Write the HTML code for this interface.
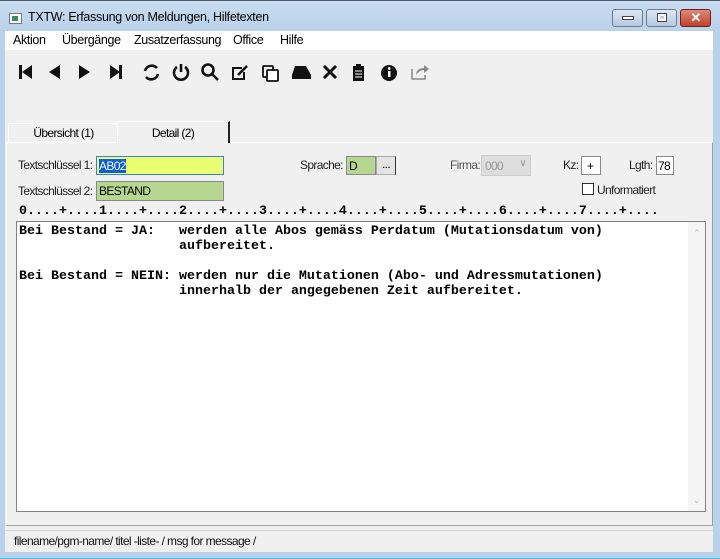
<!DOCTYPE html>
<html><head><meta charset="utf-8"><style>
*{box-sizing:border-box;margin:0;padding:0}
body{width:720px;height:559px;overflow:hidden;background:#b9d1ea;font-family:"Liberation Sans",sans-serif;font-size:12px;letter-spacing:-0.65px;position:relative}
.abs{position:absolute}
.title{left:0;top:0;width:720px;height:31px;background:linear-gradient(#c9dcf0,#b9d1ea);border-top:1px solid #4a5a6a}
.menu{left:5px;top:31px;width:708px;height:19px;background:#fff}
.menu span{position:absolute;top:2px;font-size:12.5px;letter-spacing:-0.35px}
.client{left:5px;top:50px;width:708px;height:502px;background:#f0f0f0}
.btn{top:9px;height:18px;border:1px solid #6d7b8e;border-radius:3px;background:linear-gradient(#dde8f4,#b5c8df)}
.lbl{font-size:12px;color:#222}
.mono{font-family:"Liberation Mono",monospace;font-weight:bold;font-size:13.33px;line-height:15px;white-space:pre;color:#000;letter-spacing:0}
</style></head><body>
<div class="abs title"></div>
<div class="abs" style="left:9px;top:13px;width:13px;height:11px;background:#fff;border:1px solid #777"><div style="margin:2px;width:6px;height:5px;background:#3a8a6a"></div></div>
<div class="abs" style="left:28px;top:10px;font-size:12.5px;letter-spacing:-0.3px;color:#000">TXTW: Erfassung von Meldungen, Hilfetexten</div>
<div class="abs btn" style="left:612px;width:31px"><div style="margin:6px auto;width:12px;height:4px;background:#fff;border:1px solid #445"></div></div>
<div class="abs btn" style="left:646px;width:31px"><div style="margin:3px auto;width:10px;height:9px;border:1px solid #445;background:#fff"><div style="margin:2px;height:3px;background:#ccd"></div></div></div>
<div class="abs btn" style="left:680px;width:31px;background:linear-gradient(#e08a78,#c0402c);border-color:#6a2020;color:#fff;font-weight:bold;text-align:center;font-size:13px;line-height:15px">✕</div>
<div class="abs menu">
<span style="left:8px">Aktion</span><span style="left:57px">Übergänge</span><span style="left:129px">Zusatzerfassung</span><span style="left:228px">Office</span><span style="left:275px">Hilfe</span>
</div>
<div class="abs client"></div>
<svg class="abs" style="left:0;top:60px" width="440" height="26" viewBox="0 0 440 26">
<g fill="#111">
<rect x="19" y="5" width="3" height="14"/><path d="M32 5V19L22 12Z"/>
<path d="M60 5V19L49 12Z"/>
<path d="M79 5V19L90 12Z"/>
<path d="M110 5V19L120 12Z"/><rect x="119" y="5" width="3" height="14"/>
</g>
<g fill="none" stroke="#111" stroke-width="2.6">
<path d="M145 11A7 7 0 0 1 157 8"/><path d="M158 14A7 7 0 0 1 146 17"/>
<path d="M177 7A7 7 0 1 0 185 7"/><path d="M181 4V12"/>
<circle cx="208" cy="10" r="5.5"/><path d="M212 14L218 20"/>
<path d="M242 8H233V19H244V12" stroke-width="2"/><path d="M238 15L247 6" stroke-width="2.5"/>
<rect x="263" y="6" width="10" height="11" rx="1" stroke-width="1.8"/><rect x="267" y="10" width="11" height="11" rx="1" fill="#fff" stroke-width="1.8"/>
<path d="M324 6L336 18M336 6L324 18" stroke-width="3"/>
</g>
<path fill="#111" d="M295 6H306L311 15V19H292V15Z"/>
<rect x="353" y="6" width="11" height="15" fill="#111"/><rect x="356" y="4" width="5" height="3" fill="#111"/>
<g stroke="#fff" stroke-width="1"><path d="M355 11H362M355 14H362M355 17H362"/></g>
<circle cx="389" cy="13" r="8" fill="#111"/><rect x="388" y="11" width="2.5" height="6" fill="#fff"/><circle cx="389.2" cy="8.5" r="1.4" fill="#fff"/>
<path d="M412 9V19H425V15" fill="none" stroke="#888" stroke-width="1.5"/><path d="M416 15C416 10 420 8 424 8V5L429 9L424 13V10C421 10 418 12 416 15Z" fill="#888"/>
</svg>
<div class="abs" style="left:6px;top:142px;width:707px;height:384px;border:1px solid #fff;border-right-color:#a0a0a0;border-bottom-color:#a0a0a0"></div>
<div class="abs" style="left:8px;top:123px;width:110px;height:20px;border:1px solid #fff;border-right:none;background:#f0f0f0;text-align:center;line-height:19px">Übersicht (1)</div>
<div class="abs" style="left:117px;top:121px;width:113px;height:22px;border:1px solid #fff;border-right:2px solid #222;border-bottom:none;background:#f0f0f0;text-align:center;line-height:22px">Detail (2)</div>
<div class="abs lbl" style="left:18px;top:158px">Textschlüssel 1:</div>
<div class="abs" style="left:96px;top:156px;width:128px;height:19px;border:1px solid #3c7fd6;background:#eaff70"><span style="position:absolute;left:2px;top:2px;background:#0a5fd8;color:#fff;line-height:14px">AB02</span></div>
<div class="abs lbl" style="left:18px;top:184px">Textschlüssel 2:</div>
<div class="abs" style="left:96px;top:181px;width:128px;height:20px;border:1px solid #888;background:#b5d78f;padding:2px 2px">BESTAND</div>
<div class="abs lbl" style="left:300px;top:158px">Sprache:</div>
<div class="abs" style="left:346px;top:156px;width:30px;height:19px;border:1px solid #888;background:#b5d78f;padding:2px 2px">D</div>
<div class="abs" style="left:376px;top:156px;width:20px;height:19px;border:1px solid #aaa;border-right:1px solid #333;background:#e4e4e4;text-align:center;line-height:15px">...</div>
<div class="abs lbl" style="left:450px;top:158px;color:#555">Firma:</div>
<div class="abs" style="left:481px;top:155px;width:50px;height:21px;background:#ddd;border:1px solid #ccc;color:#999;padding:3px 3px">000 <span style="position:absolute;right:4px;top:2px;font-size:10px">∨</span></div>
<div class="abs lbl" style="left:563px;top:158px">Kz:</div>
<div class="abs" style="left:581px;top:156px;width:20px;height:19px;border:1px solid #888;background:#fff;padding:2px 5px">+</div>
<div class="abs lbl" style="left:629px;top:158px">Lgth:</div>
<div class="abs" style="left:656px;top:156px;width:18px;height:19px;border:1px solid #888;background:#fff;padding:2px 1px">78</div>
<div class="abs" style="left:582px;top:183px;width:12px;height:12px;border:1px solid #333;background:#fff"></div>
<div class="abs lbl" style="left:597px;top:183px">Unformatiert</div>
<div class="abs mono" style="left:19px;top:204px">0....+....1....+....2....+....3....+....4....+....5....+....6....+....7....+....</div>
<div class="abs" style="left:16px;top:221px;width:690px;height:291px;border:1px solid #828282;background:#fff"></div>
<div class="abs" style="left:688px;top:222px;width:17px;height:289px;background:#f4f4f4;color:#bbb;font-size:9px;text-align:center"><div style="margin-top:6px">⌃</div><div style="position:absolute;bottom:5px;width:17px">⌄</div></div>
<div class="abs mono" style="left:19px;top:224px">Bei Bestand = JA:   werden alle Abos gemäss Perdatum (Mutationsdatum von)
                    aufbereitet.

Bei Bestand = NEIN: werden nur die Mutationen (Abo- und Adressmutationen)
                    innerhalb der angegebenen Zeit aufbereitet.</div>
<div class="abs" style="left:5px;top:530px;width:708px;height:1px;background:#d8d8d8"></div>
<div class="abs" style="left:14px;top:534px;font-size:12px;letter-spacing:-0.6px;color:#111">filename/pgm-name/ titel -liste- / msg for message /</div>
<div class="abs" style="left:0;top:555px;width:720px;height:4px;background:#b9d1ea;border-bottom:1px solid #3cc8e8"></div>
</body></html>
